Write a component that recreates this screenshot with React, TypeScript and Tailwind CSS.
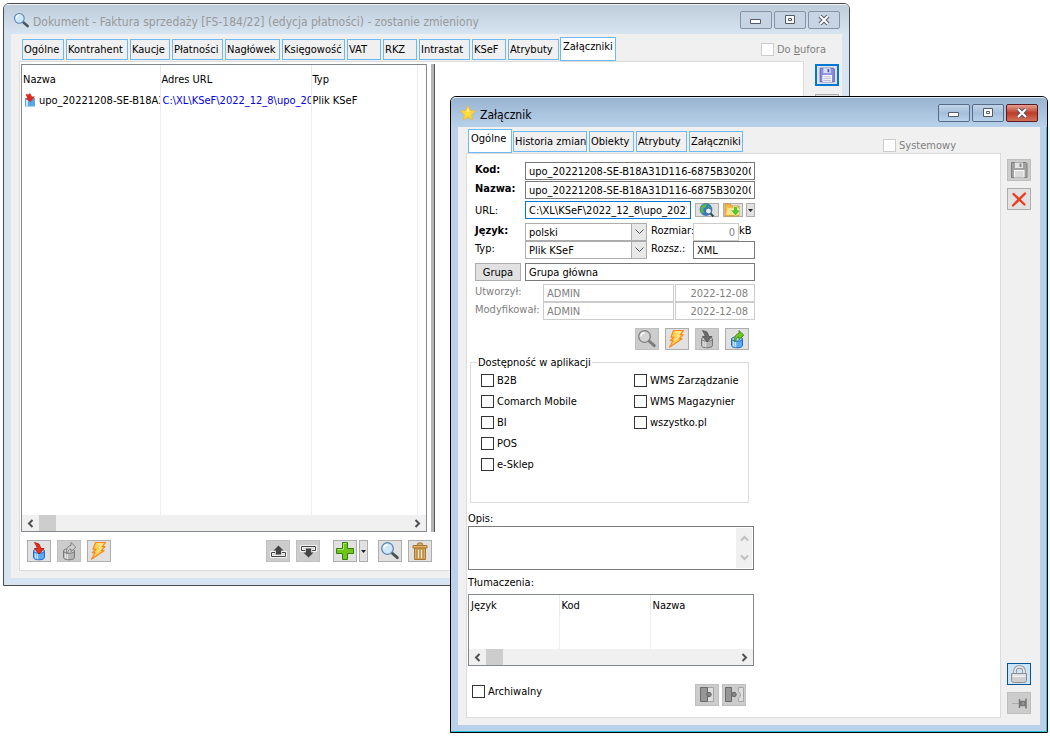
import React from 'react';
import clsx from 'clsx';

type IconProps = { muted?: boolean };

// toolbar glyphs share a 22x20 canvas, the inside of a toolbar button
const Glyph = ({ children }: { children: React.ReactNode }) => (
  <svg width="22" height="20" viewBox="1 1 22 20" aria-hidden="true">{children}</svg>
);

const Cylinder = ({ muted }: IconProps) => (
  <>
    <path d="M6.5 11v6.5c0 1.4 2.4 2.3 5.5 2.3s5.5-.9 5.5-2.3V11z" fill={muted ? '#b4b4b4' : '#5aa9f2'} stroke={muted ? '#777' : '#2569c3'} />
    <path d="M8.5 12v6.6M10.5 12.5v6.8" stroke={muted ? '#dcdcdc' : '#bfe3ff'} strokeWidth="1.5" />
    <ellipse cx="12" cy="11" rx="5.5" ry="2.2" fill={muted ? '#d6d6d6' : '#a9d6fb'} stroke={muted ? '#777' : '#2569c3'} />
  </>
);

const ImportIcon = ({ muted }: IconProps) => (
  <Glyph>
    <Cylinder muted={muted} />
    <path d="M7.5 2.500l4.500 1.500 2 4.500h3L12 14 7.500 8.500h2.800L9.500 6z" fill={muted ? '#6b6b6b' : '#ee2e1c'} stroke={muted ? '#555' : '#a81408'} strokeWidth=".8" />
  </Glyph>
);

const ExportIcon = ({ muted }: IconProps) => (
  <Glyph>
    <Cylinder muted={muted} />
    <path d="M9.5 13.5c-.6-4 1-7.3 4.5-8.1V2.5l4.800 4.700-4.800 4.500V9c-2 .3-3.300 1.700-3.300 4.500z" fill={muted ? '#cfcfcf' : '#6cc61c'} stroke={muted ? '#777' : '#3a8a10'} strokeWidth=".9" />
  </Glyph>
);

const BoltIcon = () => (
  <Glyph>
    <path d="M8.500 2.500h10l-3.200 4.200h2.900l-4 4h2.800L4.500 19.200l3.500-6.500H5.300l3.700-3.500H6z" fill="#ffd257" stroke="#f58a1f" strokeWidth="1.200" strokeLinejoin="round" />
    <path d="M10.500 4h5l-3.500 4h3l-4.500 4" fill="none" stroke="#fff0a8" />
  </Glyph>
);

const Magnifier = ({ muted }: IconProps) => (
  <>
    <path d="M14 13l5.300 4.700" stroke={muted ? '#7b7b7b' : '#4f5358'} strokeWidth="3" strokeLinecap="round" />
    <circle cx="9.500" cy="8.500" r="5.800" fill={muted ? '#d4d4d4' : '#cfe7fa'} stroke={muted ? '#808080' : '#5c87b5'} strokeWidth="1.300" />
    <path d="M6 8.500c0-2.200 1.500-3.500 3.500-3.500" fill="none" stroke="#fff" strokeWidth="1.300" />
  </>
);

const SearchIcon = ({ muted }: IconProps) => (
  <Glyph><Magnifier muted={muted} /></Glyph>
);

const TitleSearchIcon = () => (
  <svg width="16" height="16" viewBox="2 1 19 19" aria-hidden="true"><Magnifier /></svg>
);

const TrayUpIcon = () => (
  <Glyph>
    <path d="M9 12.500H5.500v4h14v-4H16" fill="none" stroke="#fff" strokeWidth="2.500" />
    <path d="M9 12.500H5.500v4h14v-4H16" fill="none" stroke="#444" />
    <path d="M12.500 5.500l5 5H15v4h-5v-4H7.500z" fill="#444" />
  </Glyph>
);

const TrayDownIcon = () => (
  <Glyph>
    <path d="M9 10.500H5.500v-4h14v4H16" fill="none" stroke="#fff" strokeWidth="2.500" />
    <path d="M9 10.500H5.500v-4h14v4H16" fill="none" stroke="#444" />
    <path d="M12.500 17.500l5-5H15v-4h-5v4H7.500z" fill="#444" />
  </Glyph>
);

const PlusIcon = () => (
  <Glyph>
    <path d="M9.500 2.500h5v6h6v5h-6v6h-5v-6h-6v-5h6z" fill="#6fc51c" stroke="#34800f" />
    <path d="M10.500 3.500h3M10.500 3.500v6h-6" fill="none" stroke="#a9e85f" />
  </Glyph>
);

const TrashIcon = () => (
  <Glyph>
    <path d="M6.500 8h11v11.500h-11z" fill="#dcae66" stroke="#a9762f" />
    <path d="M8.500 10h7v8h-7z" fill="#f7e8c4" />
    <path d="M9 9.500v9M12 9.500v9M15 9.500v9" stroke="#a9762f" strokeWidth="1.300" />
    <path d="M5 5.500h14V8H5zM9 5.500l1-2.500h4l1 2.500" fill="#dcae66" stroke="#a9762f" />
  </Glyph>
);

const SaveIcon = ({ muted }: IconProps) => (
  <Glyph>
    <path d="M4.500 3.500H19l1 1v14h-15.500z" fill={muted ? '#a2a2a2' : '#8d8fe0'} stroke={muted ? '#7d7d7d' : '#5558b5'} />
    <path d="M8 3.500h8V9H8z" fill={muted ? '#e4e4e4' : '#d5e3f7'} />
    <path d="M12.500 4.500h2V8h-2z" fill={muted ? '#888' : '#5457a8'} />
    <path d="M7 11h10.500v7.500H7z" fill="#fafafa" />
    <path d="M8 13h8.500M8 15h8.500M8 17h8.500" stroke={muted ? '#aaa' : '#a7a9c9'} strokeWidth=".8" />
  </Glyph>
);

const CrossIcon = () => (
  <Glyph>
    <path d="M6.500 6l11 10.500M18 5.500L6 17.500" stroke="#ee3a1c" strokeWidth="2.300" strokeLinecap="round" />
  </Glyph>
);

const LockIcon = () => (
  <Glyph>
    <path d="M8 11V8c0-5.500 9-5.500 9 0v3" fill="none" stroke="#8e8e8e" strokeWidth="3.500" />
    <path d="M8 11V8c0-5.500 9-5.500 9 0v3" fill="none" stroke="#e8e8e8" strokeWidth="1.800" />
    <path d="M4.500 10.500h15v7q0 2-3 2h-9q-3 0-3-2z" fill="#cfcfcf" stroke="#8e8e8e" />
    <path d="M5.500 12h13M5.500 13.500h13" stroke="#f4f4f4" />
  </Glyph>
);

const PinIcon = () => (
  <Glyph>
    <path d="M5 11.500h7" stroke="#aaa" />
    <path d="M12.500 7v9M14 9.500h4v4h-4zM19 6.500v10" fill="#999" stroke="#777" strokeWidth="1.500" />
  </Glyph>
);

const PuzzleIcon = ({ apart = false }: { apart?: boolean }) => (
  <Glyph>
    <path d={apart ? 'M16.500 3.500h5v14h-5v-3q4-3.500 0-7z' : 'M12 3.500h6.500v14H12z'} fill="#dedede" stroke="#a5a5a5" />
    <path d={apart ? 'M3.500 3.500h6v14h-6z' : 'M5.500 3.500h7v14h-7z'} fill="#969696" stroke="#6b6b6b" />
    <circle cx={apart ? 12 : 14} cy="10.500" r="2.200" fill="#858585" stroke="#666" />
  </Glyph>
);

const GlobeIcon = () => (
  <svg width="18" height="14" viewBox="0 0 18 14" aria-hidden="true">
    <circle cx="8" cy="6.500" r="6" fill="#2d7dc8" stroke="#245f9f" strokeWidth=".6" />
    <path d="M3 4c2-3 5-3.500 6-3l-1 3-3 2 1 3-2 2C2 9 2 6 3 4zM10 2l3 3-2 2z" fill="#5db64c" />
    <circle cx="10.500" cy="8" r="3" fill="#e3f2fb" stroke="#365f84" />
    <path d="M12.500 10.500l3 3" stroke="#39444e" strokeWidth="2" />
  </svg>
);

const FolderIcon = () => (
  <svg width="18" height="14" viewBox="0 0 18 14" aria-hidden="true">
    <path d="M1 13V1h5l1.500 2H15v10z" fill="#f7b94a" stroke="#d9942c" />
    <path d="M2 12l1.500-7H15v7z" fill="#ffe08b" />
    <path d="M9.500 3.500h4V7h3L11.500 13l-5-6h3z" fill="#5cc42c" stroke="#e6ffd8" strokeWidth=".6" />
  </svg>
);

const StarIcon = () => (
  <svg width="16" height="16" viewBox="0 0 16 16" aria-hidden="true">
    <path d="M8 .8l2.200 4.700 5.200.6-3.900 3.500 1.100 5.200L8 12.200l-4.600 2.600 1.100-5.200L.6 6.100l5.200-.6z" fill="#ffdc3c" stroke="#eebb35" strokeLinejoin="round" />
    <path d="M8 3l1.300 3.500H6.700z" fill="#fff8c8" />
  </svg>
);

const FileIcon = () => (
  <svg className="shrink-0" width="12" height="14" viewBox="0 0 12 14" aria-hidden="true">
    <path d="M1 5h10v8.500H1z" fill="#58a5e8" />
    <path d="M3 7v6" stroke="#c7e6fd" strokeWidth="2" />
    <path d="M1.500 1l3 .5L6 0l2 3.500h3L6.500 9 1.500 5.500h2z" fill="#dc2a1c" />
  </svg>
);

const Chevron = ({ dir, color = '#505050' }: { dir: 'left' | 'right' | 'up' | 'down'; color?: string }) => {
  const paths = { left: 'M6.500 1L3 4.500 6.500 8', right: 'M2.500 1L6 4.500 2.500 8', up: 'M1 6.500L4.500 3 8 6.500', down: 'M1 2.500L4.500 6 8 2.500' };
  return (
    <svg width="9" height="9" viewBox="0 0 9 9" aria-hidden="true">
      <path d={paths[dir]} fill="none" stroke={color} strokeWidth="2" />
    </svg>
  );
};

const ToolButton = ({ label, muted, className, children }: { label: string; muted?: boolean; className?: string; children: React.ReactNode }) => (
  <button
    type="button"
    aria-label={label}
    disabled={muted}
    className={clsx(
      'flex h-[22px] w-6 shrink-0 items-center justify-center border',
      className ?? (muted ? 'border-[#bfbfbf] bg-[#cccccc]' : 'border-[#adadad] bg-[#e1e1e1]'),
    )}
  >
    {children}
  </button>
);

const DropButton = ({ label, className }: { label: string; className: string }) => (
  <button type="button" aria-label={label} className={clsx('flex w-[9px] items-center justify-center border border-[#adadad] bg-[#e1e1e1]', className)}>
    <svg width="5" height="3" viewBox="0 0 5 3" aria-hidden="true"><path d="M0 0h5L2.500 3z" fill="#222" /></svg>
  </button>
);

const TitleBar = ({ title, icon, active }: { title: string; icon: React.ReactNode; active?: boolean }) => {
  const button = clsx(
    'flex h-[18px] w-8 items-center justify-center rounded-[2px] border',
    active ? 'border-[#566b87] bg-linear-to-b from-[#c4d5e8] via-[#a5bedb] to-[#b9d1ea]' : 'border-[#8493a8] bg-[#c6d4e3]',
  );
  return (
    <header
      className={clsx(
        'flex h-[30px] items-center gap-1 rounded-t-[5px] border-t border-white/60 px-[9px]',
        active ? 'bg-linear-to-b from-[#99b4d1] to-[#b9d1ea]' : 'bg-linear-to-b from-[#bfcddb] to-[#d7e4f2]',
      )}
    >
      {icon}
      <h1 className={clsx('flex-1 truncate pt-1.5 text-[12px]', active ? 'text-black' : 'text-[#999]')}>{title}</h1>
      <div className="flex gap-0.5">
        <button type="button" aria-label="Minimalizuj" className={button}>
          <svg width="12" height="10" viewBox="0 0 12 10"><path d="M.5 4.500h10v4H.5z" fill="#fff" stroke="#535b66" /></svg>
        </button>
        <button type="button" aria-label="Maksymalizuj" className={button}>
          <svg width="12" height="10" viewBox="0 0 12 10"><path d="M1.500 .5h9v8h-9zM4.500 3.500h3v2h-3z" fill="#fff" stroke="#535b66" /></svg>
        </button>
        <button
          type="button"
          aria-label="Zamknij"
          className={active ? 'flex h-[18px] w-8 items-center justify-center rounded-[2px] border border-[#5a1a20] bg-linear-to-b from-[#e5a092] via-[#bd3a26] to-[#d2715b]' : button}
        >
          <svg width="12" height="10" viewBox="0 0 12 10">
            <path d="M2 1l8 8M10 1L2 9" stroke="#535b66" strokeWidth="4" />
            <path d="M2 1l8 8M10 1L2 9" stroke="#fff" strokeWidth="2" />
          </svg>
        </button>
      </div>
    </header>
  );
};

type Tab = { name: string; width: string };

const TabBar = ({ tabs, current }: { tabs: Tab[]; current: string }) => (
  <nav className="flex items-end gap-0.5">
    {tabs.map((tab) => (
      <button
        key={tab.name}
        type="button"
        className={clsx(
          'flex shrink-0 border border-[#6db9f5] whitespace-nowrap',
          tab.width,
          tab.name === current ? '-mx-px h-6 bg-white px-0.5 pt-px' : 'mb-px h-[21px] bg-[#f0f0f0] px-px pt-0.5',
        )}
      >
        {tab.name}
      </button>
    ))}
  </nav>
);

const HScroll = () => (
  <div className="flex h-4 bg-[#f0f0f0]">
    <button type="button" aria-label="W lewo" className="flex w-[17px] items-center justify-center"><Chevron dir="left" /></button>
    <div className="w-[17px] bg-[#cdcdcd]" />
    <div className="flex-1" />
    <button type="button" aria-label="W prawo" className="flex w-[17px] items-center justify-center"><Chevron dir="right" /></button>
  </div>
);

const Check = ({ label, disabled }: { label: React.ReactNode; disabled?: boolean }) => (
  <label className={clsx('flex items-center gap-[3px] whitespace-nowrap', disabled && 'text-[#808080]')}>
    <input type="checkbox" disabled={disabled} className="size-[13px] shrink-0 appearance-none border border-[#333] bg-white disabled:border-[#ccc]" />
    {label}
  </label>
);

const field = 'h-[18px] min-w-0 border border-[#7a7a7a] bg-white px-[3px] outline-none';
const lockedField = 'h-[18px] min-w-0 border border-[#ccc] bg-white px-[3px] text-[#808080] outline-none';

const SelectField = ({ id, value }: { id: string; value: string }) => (
  <div className="relative w-[122px]">
    <select id={id} className="block h-[18px] w-full appearance-none border border-[#adadad] bg-white pl-[3px] outline-none">
      <option>{value}</option>
    </select>
    <span className="pointer-events-none absolute inset-y-0 right-0 flex w-4 items-center justify-center border border-[#adadad] bg-[#e8e8e8]">
      <svg width="9" height="6" viewBox="0 0 9 6"><path d="M.5 .5l4 4 4-4" fill="none" stroke="#555" /></svg>
    </span>
  </div>
);

const documentTabs: Tab[] = [
  { name: 'Ogólne', width: 'w-[42px]' },
  { name: 'Kontrahent', width: 'w-[62px]' },
  { name: 'Kaucje', width: 'w-[40px]' },
  { name: 'Płatności', width: 'w-[51px]' },
  { name: 'Nagłówek', width: 'w-[55px]' },
  { name: 'Księgowość', width: 'w-[63px]' },
  { name: 'VAT', width: 'w-[34px]' },
  { name: 'RKZ', width: 'w-[34px]' },
  { name: 'Intrastat', width: 'w-[51px]' },
  { name: 'KSeF', width: 'w-[34px]' },
  { name: 'Atrybuty', width: 'w-[51px]' },
  { name: 'Załączniki', width: 'w-[56px]' },
];

const attachmentTabs: Tab[] = [
  { name: 'Ogólne', width: 'w-[44px]' },
  { name: 'Historia zmian', width: 'w-[74px]' },
  { name: 'Obiekty', width: 'w-[45px]' },
  { name: 'Atrybuty', width: 'w-[51px]' },
  { name: 'Załączniki', width: 'w-[54px]' },
];

const DocumentWindow = () => (
  <section className="absolute top-[3px] right-[200px] left-[3px] rounded-t-[6px] border border-[#4a4a4a] bg-[#d7e4f2]">
    <TitleBar title="Dokument - Faktura sprzedaży [FS-184/22] (edycja płatności) - zostanie zmieniony" icon={<TitleSearchIcon />} />
    <div className="mx-[7px] mb-[7px] bg-[#f0f0f0] pb-[7px]">
      <div className="flex items-end justify-between pt-[3px] pr-4 pl-[11px]">
        <TabBar tabs={documentTabs} current="Załączniki" />
        <div className="pb-1">
          <Check disabled label={<span>Do <u>b</u>ufora</span>} />
        </div>
      </div>
      <div className="flex">
        <div className="ml-2 flex-1 border border-[#dcdcdc] bg-white px-px pt-0.5 pb-2">
          <div className="flex gap-1">
            <div className="flex h-[468px] w-[406px] flex-col border border-[#828790]">
              <table className="w-full flex-1 table-fixed border-collapse">
                <colgroup>
                  <col className="w-[138px]" />
                  <col className="w-[151px]" />
                  <col className="w-[106px]" />
                  <col />
                </colgroup>
                <thead>
                  <tr className="h-[25px] text-left">
                    {['Nazwa', 'Adres URL', 'Typ', ''].map((head) => (
                      <th key={head} className="border-r border-[#ebebeb] px-px pt-1 font-normal last:border-r-0">{head}</th>
                    ))}
                  </tr>
                </thead>
                <tbody>
                  <tr className="h-5 whitespace-nowrap">
                    <td className="border-r border-[#ebebeb] pl-0.5">
                      <div className="flex items-center gap-[3px] overflow-hidden"><FileIcon />upo_20221208-SE-B18A3</div>
                    </td>
                    <td className="border-r border-[#ebebeb] pl-0.5">
                      <a href="#upo" className="block overflow-hidden text-[#0000e0]">C:\XL\KSeF\2022_12_8\upo_20</a>
                    </td>
                    <td className="border-r border-[#ebebeb] pl-px">Plik KSeF</td>
                    <td />
                  </tr>
                  <tr>
                    <td className="border-r border-[#f0f0f0]" />
                    <td className="border-r border-[#f0f0f0]" />
                    <td className="border-r border-[#f0f0f0]" />
                    <td />
                  </tr>
                </tbody>
              </table>
              <HScroll />
            </div>
            <div className="w-1 border-r border-[#555] bg-[#b4b4b4]" />
          </div>
          <div className="flex w-[411px] items-center gap-1.5 pt-2 pl-1.5">
            <ToolButton label="Importuj"><ImportIcon /></ToolButton>
            <ToolButton label="Eksportuj" muted><ExportIcon muted /></ToolButton>
            <ToolButton label="Wykonaj"><BoltIcon /></ToolButton>
            <div className="flex-1" />
            <ToolButton label="W górę" muted><TrayUpIcon /></ToolButton>
            <ToolButton label="W dół" muted><TrayDownIcon /></ToolButton>
            <div className="flex gap-0.5 pr-1 pl-[7px]">
              <ToolButton label="Dodaj"><PlusIcon /></ToolButton>
              <DropButton label="Więcej opcji dodawania" className="h-[22px]" />
            </div>
            <ToolButton label="Podgląd"><SearchIcon /></ToolButton>
            <ToolButton label="Usuń"><TrashIcon /></ToolButton>
          </div>
        </div>
        <aside className="flex w-[38px] flex-col gap-2 pt-[3px] pl-[11px]">
          <ToolButton label="Zapisz" className="border-2 border-[#0078d7] bg-[#e1e1e1]"><SaveIcon /></ToolButton>
          <ToolButton label="Zamknij dokument"><CrossIcon /></ToolButton>
        </aside>
      </div>
    </div>
  </section>
);

const AttachmentWindow = () => (
  <section className="absolute top-24 right-0.5 left-[450px] rounded-t-[6px] border border-black bg-[#b9d1ea] shadow-[inset_-1px_-1px_0_#22c4dc]">
    <TitleBar active title="Załącznik" icon={<StarIcon />} />
    <div className="mx-[7px] mb-[7px] bg-[#f0f0f0] pb-[7px]">
      <div className="flex items-end pt-0.5 pl-[11px]">
        <TabBar tabs={attachmentTabs} current="Ogólne" />
        <div className="ml-auto pr-[84px]">
          <Check disabled label="Systemowy" />
        </div>
      </div>
      <div className="flex">
        <div className="ml-2 flex-1 border border-[#dcdcdc] bg-white px-px pb-[11px]">
          <div className="w-[287px] pt-2 pl-[7px]">
            <div className="flex flex-col gap-px">
              <div className="flex">
                <label htmlFor="kod" className="w-[50px] font-bold">Kod:</label>
                <input id="kod" className={clsx(field, 'flex-1')} defaultValue="upo_20221208-SE-B18A31D116-6875B30200-" />
              </div>
              <div className="flex">
                <label htmlFor="nazwa" className="w-[50px] font-bold">Nazwa:</label>
                <input id="nazwa" className={clsx(field, 'flex-1')} defaultValue="upo_20221208-SE-B18A31D116-6875B30200-" />
              </div>
            </div>
            <div className="flex items-center pt-0.5">
              <label htmlFor="url" className="w-[50px]">URL:</label>
              <input id="url" className="h-[18px] w-[166px] border border-[#0078d7] px-[3px] outline-none" defaultValue="C:\XL\KSeF\2022_12_8\upo_20221208" />
              <div className="flex flex-1 justify-between pl-1">
                <button type="button" aria-label="Otwórz adres" className="flex h-[14px] w-6 items-center justify-center border border-[#adadad] bg-[#e1e1e1]"><GlobeIcon /></button>
                <button type="button" aria-label="Wybierz plik" className="flex h-[14px] w-5 items-center justify-center border border-[#adadad] bg-[#e1e1e1]"><FolderIcon /></button>
                <DropButton label="Więcej źródeł" className="h-[14px]" />
              </div>
            </div>
            <div className="flex pt-1">
              <label htmlFor="jezyk" className="w-[50px] font-bold">Język:</label>
              <SelectField id="jezyk" value="polski" />
              <label htmlFor="rozmiar" className="w-[46px] pl-1">Rozmiar:</label>
              <input id="rozmiar" className={clsx(lockedField, 'w-[46px] text-right')} defaultValue="0" readOnly />
              <span>kB</span>
            </div>
            <div className="flex">
              <label htmlFor="typ" className="w-[50px]">Typ:</label>
              <SelectField id="typ" value="Plik KSeF" />
              <label htmlFor="rozsz" className="w-[46px] pl-1">Rozsz.:</label>
              <input id="rozsz" className={clsx(field, 'flex-1')} defaultValue="XML" />
            </div>
            <div className="flex items-start gap-1 pt-1">
              <button type="button" className="h-[18px] w-[46px] border border-[#adadad] bg-[#e1e1e1]">Grupa</button>
              <input aria-label="Grupa" className={clsx(field, 'flex-1')} defaultValue="Grupa główna" />
            </div>
            <div className="flex flex-col pt-[3px]">
              {['Utworzył:', 'Modyfikował:'].map((name) => (
                <div key={name} className="flex">
                  <label htmlFor={name} className="w-[68px] text-[#808080]">{name}</label>
                  <input id={name} className={clsx(lockedField, 'flex-1')} defaultValue="ADMIN" readOnly />
                  <input aria-label={`${name} data`} className={clsx(lockedField, 'ml-px w-[80px] pr-1.5 text-right')} defaultValue="2022-12-08" readOnly />
                </div>
              ))}
            </div>
            <div className="flex justify-end gap-1.5 pt-2 pr-1.5">
              <ToolButton label="Podgląd pliku" muted><SearchIcon muted /></ToolButton>
              <ToolButton label="Uruchom"><BoltIcon /></ToolButton>
              <ToolButton label="Wczytaj z pliku" muted><ImportIcon muted /></ToolButton>
              <ToolButton label="Zapisz do pliku"><ExportIcon /></ToolButton>
            </div>
          </div>

          <fieldset className="mt-[5px] ml-0.5 h-[148px] w-[279px] min-w-0 border border-[#dcdcdc] px-2.5">
            <legend className="-ml-1 px-px">Dostępność w aplikacji</legend>
            <div className="grid grid-cols-[153px_1fr]">
              <div className="grid auto-rows-[21px] items-center">
                {['B2B', 'Comarch Mobile', 'BI', 'POS', 'e-Sklep'].map((name) => <Check key={name} label={name} />)}
              </div>
              <div className="grid auto-rows-[21px] items-center">
                {['WMS Zarządzanie', 'WMS Magazynier', 'wszystko.pl'].map((name) => <Check key={name} label={name} />)}
              </div>
            </div>
          </fieldset>

          <div className="w-[286px]">
            <label htmlFor="opis" className="block pt-2">Opis:</label>
            <div className="flex h-11 border border-[#7a7a7a] p-px">
              <textarea id="opis" className="flex-1 resize-none outline-none" />
              <div className="flex w-4 flex-col items-center justify-between bg-[#f0f0f0] py-1.5">
                <Chevron dir="up" color="#bfbfbf" />
                <Chevron dir="down" color="#bfbfbf" />
              </div>
            </div>
            <h2 className="pt-[5px] pb-1">Tłumaczenia:</h2>
            <div className="flex h-[72px] flex-col border border-[#828790]">
              <table className="w-full flex-1 table-fixed border-collapse">
                <thead>
                  <tr className="h-5 text-left">
                    <th className="w-[90px] border-r border-[#ebebeb] pl-0.5 font-normal">Język</th>
                    <th className="w-[91px] border-r border-[#ebebeb] pl-0.5 font-normal">Kod</th>
                    <th className="pl-0.5 font-normal">Nazwa</th>
                  </tr>
                </thead>
                <tbody>
                  <tr>
                    <td className="border-r border-[#f0f0f0]" />
                    <td className="border-r border-[#f0f0f0]" />
                    <td />
                  </tr>
                </tbody>
              </table>
              <HScroll />
            </div>
            <div className="flex items-start gap-[3px] pt-[18px] pr-2 pl-1">
              <Check label="Archiwalny" />
              <div className="flex-1" />
              <ToolButton label="Połącz" muted><PuzzleIcon /></ToolButton>
              <ToolButton label="Rozłącz" muted><PuzzleIcon apart /></ToolButton>
            </div>
          </div>
        </div>
        <aside className="flex w-[39px] flex-col gap-[7px] pt-1.5 pb-1 pl-1.5">
          <ToolButton label="Zapisz załącznik" muted><SaveIcon muted /></ToolButton>
          <ToolButton label="Anuluj"><CrossIcon /></ToolButton>
          <div className="flex-1" />
          <ToolButton label="Zablokuj" className="border-[#00559b] bg-[#cce4f7]"><LockIcon /></ToolButton>
          <ToolButton label="Przypnij" muted><PinIcon /></ToolButton>
        </aside>
      </div>
    </div>
  </section>
);

export default function App() {
  return (
    <main className="relative min-h-screen bg-white font-['DejaVu_Sans_Condensed','Noto_Sans',sans-serif] text-[11px] leading-[15px] text-black">
      <DocumentWindow />
      <AttachmentWindow />
    </main>
  );
}
